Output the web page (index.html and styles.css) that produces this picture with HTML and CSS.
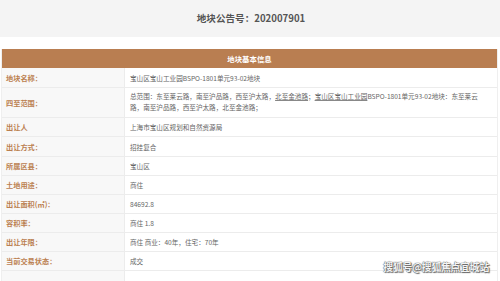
FILE: index.html
```html
<!DOCTYPE html>
<html lang="zh">
<head>
<meta charset="utf-8">
<link rel="stylesheet" href="styles.css">
</head>
<body>
<div class="page">
  <div class="title-band"><h1 class="title">地块公告号：202007901</h1></div>
  <div class="info">
    <div class="head">地块基本信息</div>
    <div class="row h20"><div class="label">地块名称：</div><div class="value">宝山区宝山工业园BSPO-1801单元93-02地块</div></div>
    <div class="row h30"><div class="label">四至范围：</div><div class="value two">总范围：东至莱云路，南至沪品路，西至沪太路，<span class="ul">北至金池路</span>；<span class="ul">宝山区宝山工业园</span>BSPO-1801单元93-02地块：东至莱云<br>路，南至沪品路，西至沪太路，北至金池路；</div></div>
    <div class="row"><div class="label">出让人</div><div class="value">上海市宝山区规划和自然资源局</div></div>
    <div class="row h20"><div class="label">出让方式：</div><div class="value">招挂复合</div></div>
    <div class="row"><div class="label">所属区县：</div><div class="value">宝山区</div></div>
    <div class="row"><div class="label">土地用途：</div><div class="value">商住</div></div>
    <div class="row"><div class="label">出让面积(㎡)：</div><div class="value">84692.8</div></div>
    <div class="row"><div class="label">容积率：</div><div class="value">商住 1.8</div></div>
    <div class="row"><div class="label">出让年限：</div><div class="value">商住 商业：40年，住宅：70年</div></div>
    <div class="row"><div class="label">当前交易状态：</div><div class="value">成交</div></div>
    <div class="row"><div class="label"></div><div class="value"></div></div>
  </div>
  <div class="watermark">搜狐号@搜狐焦点宜城站</div>
</div>
</body>
</html>
```
FILE: styles.css
```css
html, body {
  margin: 0;
  padding: 0;
  background: #ffffff;
}
body {
  font-family: "Noto Sans CJK SC", "Noto Sans", sans-serif;
  width: 500px;
  height: 281px;
  overflow: hidden;
}
.page {
  position: relative;
  width: 500px;
  height: 281px;
  overflow: hidden;
}
.title-band {
  height: 37px;
  background: #f4f4f4;
  display: flex;
  align-items: center;
  justify-content: center;
}
.title {
  margin: 0;
  font-size: 9.6px;
  font-weight: 700;
  color: #555555;
  line-height: 1;
  padding-left: 2px;
}
.info {
  margin: 12px 2px 0 1px;
  border-left: 1px solid #efefef;
  border-right: 1px solid #efefef;
}
.head {
  height: 19px;
  background: #b97e51;
  color: #ffffff;
  font-size: 7.4px;
  font-weight: 700;
  display: flex;
  align-items: center;
  justify-content: center;
}
.row {
  box-sizing: border-box;
  height: 19px;
  display: flex;
  border-bottom: 1px solid #ececec;
}
.row.h20 { height: 20px; }
.row.h30 { height: 30px; }
.label {
  width: 123px;
  flex: none;
  background: #f8f8f8;
  border-right: 1px solid #ececec;
  color: #bb8050;
  font-size: 7.2px;
  font-weight: 700;
  display: flex;
  align-items: center;
  padding-left: 4px;
  box-sizing: border-box;
}
.value {
  flex: 1;
  color: #666666;
  font-size: 6.6px;
  display: flex;
  align-items: center;
  padding-left: 5px;
  white-space: nowrap;
}
.value.two {
  display: block;
  line-height: 11px;
  padding-top: 3px;
}
.ul {
  text-decoration: underline;
  text-decoration-color: #888888;
}
.watermark {
  position: absolute;
  right: 11px;
  bottom: 7px;
  font-size: 9.8px;
  color: #f4f4f4;
  font-weight: 700;
  letter-spacing: -0.2px;
  text-shadow: 0 0 1px #555, 0 0 1px #555, 1px 1px 1px #666;
}
```
